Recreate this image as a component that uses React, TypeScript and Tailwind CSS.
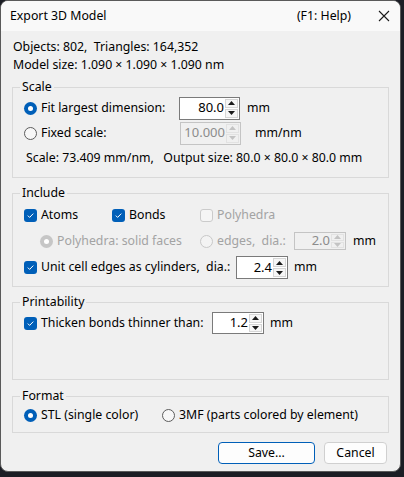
import React from 'react';

const font = "font-['Noto_Sans',sans-serif]";

function Radio({ checked, disabled }: { checked?: boolean; disabled?: boolean }) {
  if (checked) {
    return (
      <span
        className={`flex h-[13px] w-[13px] shrink-0 items-center justify-center rounded-full ${
          disabled ? 'bg-[#c6c6c6]' : 'bg-[#005fb8]'
        }`}
      >
        <span className="h-[5px] w-[5px] rounded-full bg-white" />
      </span>
    );
  }
  return (
    <span
      className={`h-[13px] w-[13px] shrink-0 rounded-full border ${
        disabled ? 'border-[#c8c8c8] bg-[#f3f3f3]' : 'border-[#5c5c5c] bg-[#f7f7f7]'
      }`}
    />
  );
}

function Check({ checked, disabled }: { checked?: boolean; disabled?: boolean }) {
  if (checked) {
    return (
      <span className="flex h-[13px] w-[13px] shrink-0 items-center justify-center rounded-[3px] bg-[#005fb8]">
        <svg width="9" height="9" viewBox="0 0 9 9">
          <path d="M1.8 4.6 L3.6 6.4 L7.3 2.6" fill="none" stroke="white" strokeWidth="1" />
        </svg>
      </span>
    );
  }
  return (
    <span
      className={`h-[13px] w-[13px] shrink-0 rounded-[3px] border ${
        disabled ? 'border-[#cbcbcb] bg-[#f5f5f5]' : 'border-[#5c5c5c] bg-[#f7f7f7]'
      }`}
    />
  );
}

function Arrow({ up, disabled }: { up?: boolean; disabled?: boolean }) {
  return (
    <svg width="7" height="4" viewBox="0 0 7 4">
      <path
        d={up ? 'M0 4 L3.5 0 L7 4 Z' : 'M0 0 L3.5 4 L7 0 Z'}
        fill={disabled ? '#c3c3c3' : '#1a1a1a'}
      />
    </svg>
  );
}

function Spin({
  value,
  className,
  disabled,
}: {
  value: string;
  className: string;
  disabled?: boolean;
}) {
  return (
    <div
      className={`flex shrink-0 border ${className} ${
        disabled ? 'border-[#c4c4c4] bg-[#f0f0f0] text-[#8c8c8c]' : 'border-[#7a7a7a] bg-white text-black'
      }`}
    >
      <div className="flex flex-1 items-center justify-end pr-[1px] text-[13px]">{value}</div>
      <div className="flex w-[14px] flex-col gap-[1px] py-[1px] pr-[1px]">
        <div
          className={`flex flex-1 items-center justify-center border ${
            disabled ? 'border-[#e2e2e2] bg-[#f0f0f0]' : 'border-[#d6d6d6] bg-[#f6f6f6]'
          }`}
        >
          <Arrow up disabled={disabled} />
        </div>
        <div
          className={`flex flex-1 items-center justify-center border ${
            disabled ? 'border-[#e2e2e2] bg-[#f0f0f0]' : 'border-[#d6d6d6] bg-[#f6f6f6]'
          }`}
        >
          <Arrow disabled={disabled} />
        </div>
      </div>
    </div>
  );
}

function Group({
  title,
  className,
  children,
}: {
  title: string;
  className: string;
  children: React.ReactNode;
}) {
  return (
    <div className={`mx-[11px] border border-[#d9d9d9] ${className}`}>
      <div className="-mt-[9px] ml-[7px] w-fit bg-[#f0f0f0] px-[2px] leading-[16px]">{title}</div>
      {children}
    </div>
  );
}

export default function App() {
  return (
    <div className={`h-[477px] w-[404px] whitespace-nowrap bg-[#1b1d24] text-[12.3px] text-black ${font}`}>
      <div className="flex h-[472px] w-[401px] flex-col overflow-hidden rounded-[8px] border border-[#5a5a5a] bg-[#f0f0f0]">
        {/* title bar */}
        <div className="flex h-[30px] shrink-0 items-center bg-[#f9f9f9] pl-[9px] pr-[10px]">
          <span>Export 3D Model</span>
          <span className="ml-auto mr-[27px]">(F1: Help)</span>
          <svg width="12" height="12" viewBox="0 0 12 12">
            <path d="M1 1 L11 11 M11 1 L1 11" stroke="#1a1a1a" strokeWidth="1.1" />
          </svg>
        </div>

        <div className="px-[12px] pt-[7px] leading-[18px]">
          <div>Objects: 802,&nbsp; Triangles: 164,352</div>
          <div>Model size: 1.090 × 1.090 × 1.090 nm</div>
        </div>

        <Group title="Scale" className="mt-[13px] pb-[11px]">
          <div className="mt-[2px] flex h-[22px] items-center">
            <div className="flex w-[166px] shrink-0 items-center gap-[4px] pl-[11px]">
              <Radio checked />
              <span>Fit largest dimension:</span>
            </div>
            <Spin value="80.0" className="h-[23px] w-[61px]" />
            <span className="ml-[7px]">mm</span>
          </div>
          <div className="mt-[3px] flex h-[22px] items-center">
            <div className="flex w-[167px] shrink-0 items-center gap-[4px] pl-[11px]">
              <Radio />
              <span>Fixed scale:</span>
            </div>
            <Spin value="10.000" className="h-[23px] w-[61px]" disabled />
            <span className="ml-[14px]">mm/nm</span>
          </div>
          <div className="mt-[6px] flex h-[16px] items-center pl-[13px]">
            Scale: 73.409 mm/nm,&nbsp;&nbsp; Output size: 80.0 × 80.0 × 80.0 mm
          </div>
        </Group>

        <Group title="Include" className="mt-[15px] pb-[7px]">
          <div className="mt-[6px] flex h-[16px] items-center">
            <div className="flex w-[99px] shrink-0 items-center gap-[4px] pl-[11px]">
              <Check checked />
              <span>Atoms</span>
            </div>
            <div className="flex w-[88px] shrink-0 items-center gap-[4px]">
              <Check checked />
              <span>Bonds</span>
            </div>
            <div className="flex items-center gap-[4px] text-[#a3a3a3]">
              <Check disabled />
              <span>Polyhedra</span>
            </div>
          </div>
          <div className="mt-[8px] flex h-[20px] items-center text-[#a3a3a3]">
            <div className="flex w-[187px] shrink-0 items-center gap-[4px] pl-[27px]">
              <Radio checked disabled />
              <span>Polyhedra: solid faces</span>
            </div>
            <div className="flex w-[94px] shrink-0 items-center gap-[4px]">
              <Radio disabled />
              <span>edges,&nbsp; dia.:</span>
            </div>
            <Spin value="2.0" className="h-[18px] w-[52px]" disabled />
            <span className="ml-[7px] text-black">mm</span>
          </div>
          <div className="mt-[5px] flex h-[23px] items-center">
            <div className="flex w-[223px] shrink-0 items-center gap-[4px] pl-[11px]">
              <Check checked />
              <span>Unit cell edges as cylinders,&nbsp; dia.:</span>
            </div>
            <Spin value="2.4" className="h-[23px] w-[52px]" />
            <span className="ml-[6px]">mm</span>
          </div>
        </Group>

        <Group title="Printability" className="mt-[15px] pb-[45px]">
          <div className="mt-[2px] flex h-[22px] items-center">
            <div className="flex w-[199px] shrink-0 items-center gap-[4px] pl-[11px]">
              <Check checked />
              <span>Thicken bonds thinner than:</span>
            </div>
            <Spin value="1.2" className="h-[22px] w-[52px]" />
            <span className="ml-[6px]">mm</span>
          </div>
        </Group>

        <Group title="Format" className="mt-[16px] pb-[9px]">
          <div className="mt-[3px] flex h-[16px] items-center">
            <div className="flex w-[149px] shrink-0 items-center gap-[4px] pl-[11px]">
              <Radio checked />
              <span>STL (single color)</span>
            </div>
            <div className="flex items-center gap-[4px]">
              <Radio />
              <span>3MF (parts colored by element)</span>
            </div>
          </div>
        </Group>

        <div className="mt-[9px] flex justify-end gap-[9px] pr-[13px]">
          <button className="h-[22px] w-[97px] rounded-[4px] border border-[#005fb8] bg-[#fdfdfd]">
            Save...
          </button>
          <button className="h-[22px] w-[63px] rounded-[4px] border border-[#d0d0d0] bg-[#fdfdfd]">
            Cancel
          </button>
        </div>
      </div>
    </div>
  );
}
